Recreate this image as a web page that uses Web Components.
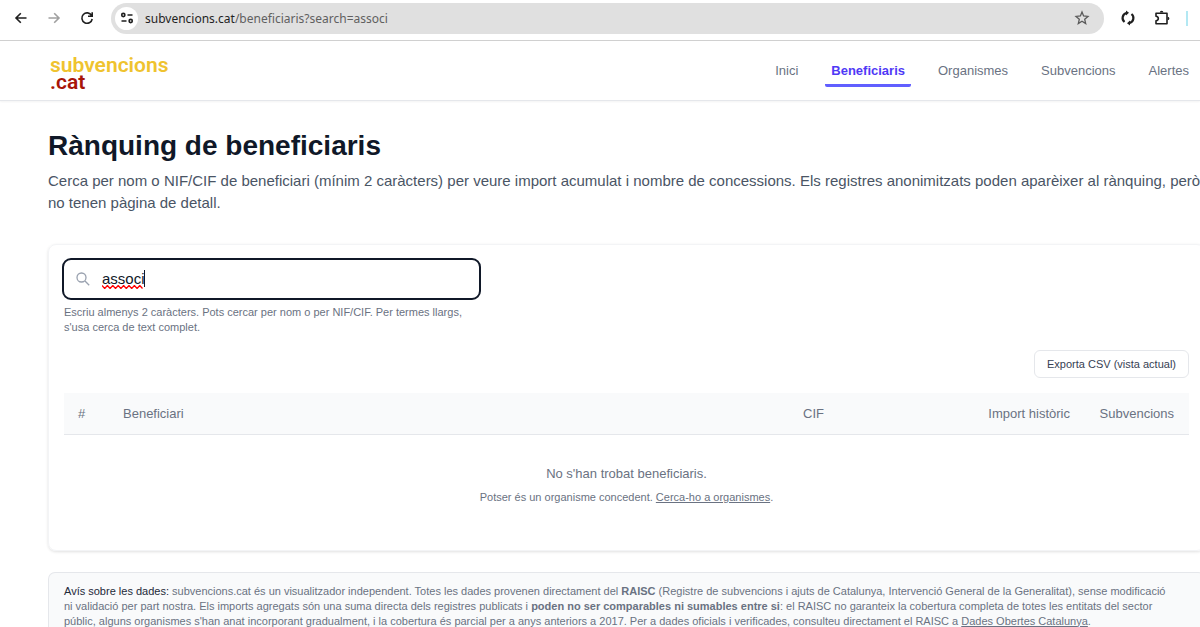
<!DOCTYPE html>
<html lang="ca">
<head>
<meta charset="utf-8">
<meta name="viewport" content="width=device-width, initial-scale=1">
<title>Rànquing de beneficiaris</title>
<style>
    body {
        margin: 0;
        overflow-x: hidden;
        background: #fff;
        color: #4a5565;
        font-family: "Liberation Sans", Arial, sans-serif;
        font-size: 15px;
    }
</style>
</head>
<body>
<browser-bar host="subvencions.cat" path="/beneficiaris?search=associ"></browser-bar>
<site-header>
    <nav-link href="#inici">Inici</nav-link>
    <nav-link href="#beneficiaris" active>Beneficiaris</nav-link>
    <nav-link href="#organismes">Organismes</nav-link>
    <nav-link href="#subvencions">Subvencions</nav-link>
    <nav-link href="#alertes">Alertes</nav-link>
</site-header>
<page-main>
    <page-title>
        <span slot="title">Rànquing de beneficiaris</span>
        Cerca per nom o NIF/CIF de beneficiari (mínim 2 caràcters) per veure import acumulat i nombre de concessions. Els registres anonimitzats poden aparèixer al rànquing, però no tenen pàgina de detall.
    </page-title>
    <result-card>
        <search-field slot="search" value="associ">Escriu almenys 2 caràcters. Pots cercar per nom o per NIF/CIF. Per termes llargs, s'usa cerca de text complet.</search-field>
        <export-button slot="actions">Exporta CSV (vista actual)</export-button>
        <beneficiary-table></beneficiary-table>
    </result-card>
    <data-notice></data-notice>
</page-main>

<script>
// Small helper: attach an open root filled from a template
class BaseElement extends HTMLElement {
    constructor() {
        super();
        const template = document.createElement('template');
        template.innerHTML = this.constructor.markup;
        this.attachShadow({mode: 'open'}).appendChild(template.content.cloneNode(true));
    }
}

class BrowserBar extends BaseElement {
    static markup = `
        <style>
            :host {
                display: flex;
                align-items: center;
                box-sizing: border-box;
                height: 41px;
                padding: 0 12px 4px 13px;
                border-bottom: 1px solid #d0d0d0;
                font-family: "Noto Sans", "Open Sans", sans-serif;
            }
            button {
                display: flex;
                padding: 0;
                border: 0;
                background: none;
                color: #1f1f1f;
            }
            svg {
                width: 16px;
                height: 16px;
                fill: none;
                stroke: currentColor;
                stroke-width: 1.6;
            }
            .nav {
                display: flex;
                gap: 17px;
            }
            .nav button:disabled {
                color: #a0a0a0;
            }
            .address {
                flex: 1;
                display: flex;
                align-items: center;
                gap: 7px;
                box-sizing: border-box;
                height: 31px;
                margin-left: 16px;
                padding: 0 14px 0 4px;
                border-radius: 16px;
                background: #e0e0e0;
                font-size: 12px;
                color: #5f5f5f;
            }
            .site {
                align-items: center;
                justify-content: center;
                width: 23px;
                height: 23px;
                border-radius: 50%;
                background: #fff;
            }
            .url {
                flex: 1;
                outline: 0;
            }
            .host {
                color: #1f1f1f;
            }
            .tools {
                display: flex;
                align-items: center;
                gap: 18px;
                margin-left: 16px;
            }
            .divider {
                width: 2px;
                height: 15px;
                margin-left: -2px;
                background: #b3e8f3;
            }
        </style>
        <div class="nav">
            <button aria-label="Enrere"><svg viewBox="0 0 16 16"><path d="M13.500 8H3M7.800 3.200 3 8l4.800 4.800"/></svg></button>
            <button aria-label="Endavant" disabled><svg viewBox="0 0 16 16"><path d="M2.500 8H13M8.200 3.200 13 8l-4.800 4.800"/></svg></button>
            <button aria-label="Actualitza"><svg viewBox="0 0 16 16"><path d="M12.600 5.500A5.200 5.200 0 1 0 13.200 9M13.200 2.200V6.200H9"/></svg></button>
        </div>
        <div class="address">
            <button class="site" aria-label="Informació del lloc"><svg viewBox="0 0 16 16"><circle cx="4.300" cy="5" r="1.600"/><path d="M8.500 5H13.500M2.500 11H7.500"/><circle cx="11.700" cy="11" r="1.600"/></svg></button>
            <div class="url" role="textbox" aria-label="Adreça" contenteditable="true" spellcheck="false"><span class="host"></span><span class="path"></span></div>
            <button aria-label="Afegeix a preferits"><svg viewBox="0 0 16 16" style="stroke:#5a5a5a;stroke-width:1.300"><path d="M8 2l1.600 4 4.400.4-3.300 2.900 1 4.300L8 11.300l-3.700 2.300 1-4.300L2 6.400 6.400 6z"/></svg></button>
        </div>
        <div class="tools">
            <button aria-label="Sincronitza"><svg viewBox="0 0 16 16" style="stroke-width:2.200"><path d="M6.300 3A5.200 5.200 0 0 0 4.500 12M9.700 13A5.200 5.200 0 0 0 11.500 4"/><path d="M6 .500l3 2.300-3 2.700zM10 10.500v5L7 13.200z" fill="currentColor" stroke="none"/></svg></button>
            <button aria-label="Extensions"><svg viewBox="0 0 16 16"><path d="M2 3.200H13V13.800H2V10.700Q4.300 10.500 4.300 8.500T2 6.300z" stroke-linejoin="round"/><path d="M5.800 2.600a1.800 1.800 0 0 1 3.600 0zM13.600 6.700a1.800 1.800 0 0 1 0 3.600z" fill="currentColor" stroke="none"/></svg></button>
            <span class="divider"></span>
        </div>
    `;

    connectedCallback() {
        this.shadowRoot.querySelector('.host').textContent = this.getAttribute('host');
        this.shadowRoot.querySelector('.path').textContent = this.getAttribute('path');
    }
}

class SiteHeader extends BaseElement {
    static markup = `
        <style>
            :host {
                display: flex;
                align-items: center;
                justify-content: space-between;
                box-sizing: border-box;
                height: 60px;
                padding: 0 5px 0 50px;
                border-bottom: 1px solid #e5e7eb;
                box-shadow: 0 1px 2px rgba(0, 0, 0, .05);
            }
            .logo {
                display: flex;
                flex-direction: column;
                padding-top: 6px;
                font: 600 21px/17px Roboto, sans-serif;
                color: #efc32f;
                text-decoration: none;
            }
            .tld {
                color: #a81508;
            }
            nav {
                display: flex;
                gap: 21px;
            }
        </style>
        <a class="logo" href="#inici"><span>subvencions</span><span class="tld">.cat</span></a>
        <nav><slot></slot></nav>
    `;
}

class NavLink extends BaseElement {
    static markup = `
        <style>
            :host {
                display: block;
            }
            a {
                display: block;
                padding: 9px 6px 6px;
                border-bottom: 3px solid transparent;
                border-radius: 2px;
                font-size: 13px;
                line-height: 15px;
                color: #6a7282;
                text-decoration: none;
            }
            :host([active]) a {
                border-color: #615fff;
                color: #4f39f6;
                font-weight: 700;
            }
        </style>
        <a><slot></slot></a>
    `;

    connectedCallback() {
        this.shadowRoot.querySelector('a').href = this.getAttribute('href');
    }
}

class PageMain extends BaseElement {
    static markup = `
        <style>
            :host {
                display: block;
                margin-right: -5px;
                padding: 28px 0 0 48px;
            }
            main {
                display: flex;
                flex-direction: column;
            }
        </style>
        <main><slot></slot></main>
    `;
}

class PageTitle extends BaseElement {
    static markup = `
        <style>
            :host {
                display: block;
                margin-bottom: 30px;
            }
            h1 {
                margin: 0 0 7px;
                font-size: 28px;
                line-height: 34px;
                color: #101828;
            }
            p {
                margin: 0;
                line-height: 22px;
            }
        </style>
        <h1><slot name="title"></slot></h1>
        <p><slot></slot></p>
    `;
}

class ResultCard extends BaseElement {
    static markup = `
        <style>
            :host {
                display: flex;
                flex-direction: column;
                padding: 15px;
                border: 1px solid #f3f4f6;
                border-radius: 8px;
                box-shadow: 0 1px 3px rgba(0, 0, 0, .12);
            }
            .actions {
                display: flex;
                justify-content: flex-end;
                margin: 15px 0;
            }
        </style>
        <slot name="search"></slot>
        <div class="actions"><slot name="actions"></slot></div>
        <slot></slot>
    `;
}

class SearchField extends BaseElement {
    static markup = `
        <style>
            :host {
                display: block;
                max-width: 415px;
            }
            .box {
                position: relative;
                display: flex;
                align-items: center;
                height: 38px;
                border-radius: 7px;
                outline: 2px solid #101828;
            }
            .icon {
                position: absolute;
                left: 12px;
                width: 14px;
                height: 14px;
                fill: none;
                stroke: #99a1af;
                stroke-width: 1.3;
            }
            input {
                flex: 1;
                min-width: 0;
                height: 38px;
                box-sizing: border-box;
                padding: 0 12px 2px 38px;
                border: 0;
                outline: 0;
                background: none;
                font: inherit;
                color: #101828;
            }
            /* spelling mark and caret lie over the typed text */
            .spelling {
                position: absolute;
                left: 38px;
                bottom: 9px;
                width: 43px;
                height: 4px;
            }
            .caret {
                position: absolute;
                top: 10px;
                left: 80px;
                width: 1px;
                height: 17px;
                background: #101828;
            }
            p {
                margin: 7px 0 0;
                font-size: 11px;
                line-height: 15px;
                color: #6a7282;
            }
        </style>
        <div class="box">
            <svg class="icon" viewBox="0 0 14 14"><circle cx="5.500" cy="5.500" r="4.500"/><path d="M9 9l4.200 4.200"/></svg>
            <input type="text" aria-label="Cerca beneficiaris" aria-describedby="help" spellcheck="false">
            <svg class="spelling" viewBox="0 0 43 4" fill="none" stroke="#f00" stroke-width="1.3"><path d="M0 .500l2.700 3 2.700-3 2.700 3 2.700-3 2.700 3 2.700-3 2.700 3 2.700-3 2.700 3 2.700-3 2.700 3 2.700-3 2.700 3 2.700-3 2.700 3"/></svg>
            <span class="caret"></span>
        </div>
        <p id="help"><slot></slot></p>
    `;

    connectedCallback() {
        this.shadowRoot.querySelector('input').value = this.getAttribute('value') || '';
    }
}

class ExportButton extends BaseElement {
    static markup = `
        <style>
            :host {
                display: block;
            }
            button {
                display: block;
                padding: 6px 12px;
                border: 1px solid #e5e7eb;
                border-radius: 6px;
                background: #fff;
                font: inherit;
                font-size: 11px;
                line-height: 14px;
                color: #364153;
            }
        </style>
        <button type="button"><slot></slot></button>
    `;
}

class BeneficiaryTable extends BaseElement {
    static markup = `
        <style>
            :host {
                display: block;
            }
            table {
                width: 100%;
                table-layout: fixed;
                border-collapse: collapse;
                font-size: 13px;
                color: #6a7282;
            }
            th {
                box-sizing: border-box;
                height: 41px;
                padding: 0 14px;
                border-bottom: 1px solid #e5e7eb;
                background: #f9fafb;
                font-weight: 400;
                text-align: left;
                white-space: nowrap;
            }
            .rank { width: 45px; }
            .cif { width: 170px; }
            .import { width: 126px; }
            .count { width: 104px; }
            .import, .count { padding-right: 15px; text-align: right; }
            td {
                padding: 30px 14px;
                line-height: 18px;
                text-align: center;
            }
            p {
                margin: 0;
            }
            .hint {
                margin-top: 7px;
                font-size: 11px;
                line-height: 15px;
            }
            a {
                color: inherit;
            }
        </style>
        <table>
            <thead>
                <tr>
                    <th class="rank">#</th>
                    <th>Beneficiari</th>
                    <th class="cif">CIF</th>
                    <th class="import">Import històric</th>
                    <th class="count">Subvencions</th>
                </tr>
            </thead>
            <tbody>
                <tr>
                    <td colspan="5">
                        <p>No s'han trobat beneficiaris.</p>
                        <p class="hint">Potser és un organisme concedent. <a href="#organismes">Cerca-ho a organismes</a>.</p>
                    </td>
                </tr>
            </tbody>
        </table>
    `;
}

class DataNotice extends BaseElement {
    static markup = `
        <style>
            :host {
                display: block;
                margin-top: 21px;
                padding: 11px 28px 0 15px;
                border: 1px solid #e5e7eb;
                border-bottom: 0;
                border-radius: 7px 7px 0 0;
                background: #f9fafb;
                font-size: 11px;
                line-height: 15px;
                color: #6a7282;
            }
            p {
                margin: 0;
            }
            .label {
                color: #1e2939;
            }
            a {
                color: inherit;
            }
        </style>
        <p><span class="label">Avís sobre les dades:</span> subvencions.cat és un visualitzador independent. Totes les dades provenen directament del <b>RAISC</b> (Registre de subvencions i ajuts de Catalunya, Intervenció General de la Generalitat), sense modificació ni validació per part nostra. Els imports agregats són una suma directa dels registres publicats i <b>poden no ser comparables ni sumables entre si</b>: el RAISC no garanteix la cobertura completa de totes les entitats del sector públic, alguns organismes s'han anat incorporant gradualment, i la cobertura és parcial per a anys anteriors a 2017. Per a dades oficials i verificades, consulteu directament el RAISC a <a href="#dades">Dades Obertes Catalunya</a>.</p>
    `;
}

customElements.define('browser-bar', BrowserBar);
customElements.define('site-header', SiteHeader);
customElements.define('nav-link', NavLink);
customElements.define('page-main', PageMain);
customElements.define('page-title', PageTitle);
customElements.define('result-card', ResultCard);
customElements.define('search-field', SearchField);
customElements.define('export-button', ExportButton);
customElements.define('beneficiary-table', BeneficiaryTable);
customElements.define('data-notice', DataNotice);
</script>
</body>
</html>
